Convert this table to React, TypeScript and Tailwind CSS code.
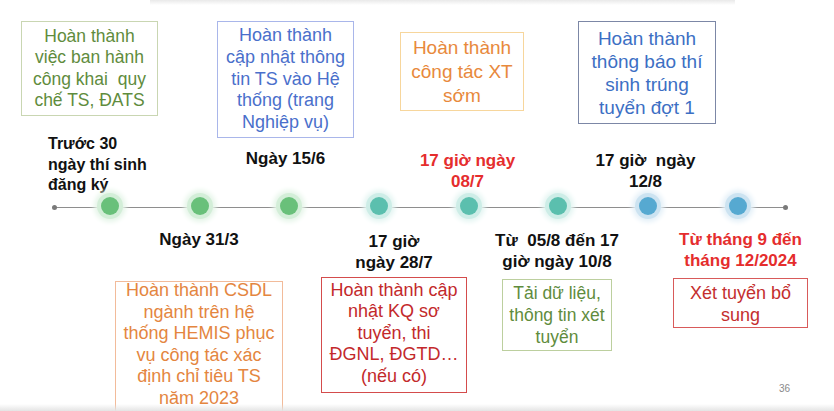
import type { ReactNode } from "react";

interface BoxProps {
  lines: string[];
  className: string;
}

// Khung văn bản có viền, mỗi dòng tách riêng để giữ đúng chỗ xuống dòng
function Box({ lines, className }: BoxProps) {
  return (
    <div className={`border text-center whitespace-pre ${className}`}>
      {lines.map((line) => (
        <div key={line}>{line}</div>
      ))}
    </div>
  );
}

function Label({ children, className = "" }: { children: ReactNode; className?: string }) {
  return (
    <div className={`font-bold text-[17px] leading-[21px] text-center whitespace-pre ${className}`}>
      {children}
    </div>
  );
}

const dots = [
  { fill: "bg-[#69c07a]", glow: "bg-[#d3eed8] shadow-[0_0_5px_3px_#e6f5e9]" },
  { fill: "bg-[#69c07a]", glow: "bg-[#d3eed8] shadow-[0_0_5px_3px_#e6f5e9]" },
  { fill: "bg-[#69c07a]", glow: "bg-[#d3eed8] shadow-[0_0_5px_3px_#e6f5e9]" },
  { fill: "bg-[#5bbfae]", glow: "bg-[#cdede7] shadow-[0_0_5px_3px_#e4f5f2]" },
  { fill: "bg-[#5bbfae]", glow: "bg-[#cdede7] shadow-[0_0_5px_3px_#e4f5f2]" },
  { fill: "bg-[#5bbfae]", glow: "bg-[#cdede7] shadow-[0_0_5px_3px_#e4f5f2]" },
  { fill: "bg-[#56a9d1]", glow: "bg-[#cce3f1] shadow-[0_0_5px_3px_#e4f0f8]" },
  { fill: "bg-[#56a9d1]", glow: "bg-[#cce3f1] shadow-[0_0_5px_3px_#e4f0f8]" },
];

export default function App() {
  return (
    <div className="relative w-[834px] h-[411px] overflow-hidden bg-white font-['Liberation_Sans','Arial',sans-serif] text-[#111]">
      <div className="ml-[150px] w-[585px] h-[5px] bg-linear-to-b from-[#e9e9e9] to-white" />

      {/* phần trên trục thời gian */}
      <div className="flex items-start h-[188px]">
        <div className="ml-[21px] w-[137px] flex flex-col">
          <Box
            lines={["Hoàn thành", "việc ban hành", "công khai  quy", "chế TS, ĐATS"]}
            className="mt-[16px] border-[#c9d6b2] text-[#5f8c3d] text-[17.5px] leading-[21.6px] pt-[3.5px] pb-[3.5px]"
          />
          <div className="mt-[18px] pl-[27px] font-bold text-[16px] leading-[20.5px] whitespace-nowrap">
            <div>Trước 30</div>
            <div>ngày thí sinh</div>
            <div>đăng ký</div>
          </div>
        </div>

        <div className="ml-[59px] w-[137px] flex flex-col">
          <Box
            lines={["Hoàn thành", "cập nhật thông", "tin TS vào Hệ", "thống (trang", "Nghiệp vụ)"]}
            className="mt-[16px] border-[#a9b6ea] text-[#4a6fcb] text-[18px] leading-[21.75px] py-[3px]"
          />
          <Label className="mt-[10.5px]">Ngày 15/6</Label>
        </div>

        <div className="ml-[46px] w-[124px] flex flex-col">
          <Box
            lines={["Hoàn thành", "công tác XT", "sớm"]}
            className="mt-[27px] border-[#f7d69c] text-[#e8893c] text-[19px] leading-[24px] pt-[3px] pb-[2px]"
          />
          <Label className="mt-[38.5px] pl-[11px] text-[#e52d2d]">
            <div>17 giờ ngày</div>
            <div>08/7</div>
          </Label>
        </div>

        <div className="ml-[54px] w-[138px] flex flex-col">
          <Box
            lines={["Hoàn thành", "thông báo thí", "sinh trúng", "tuyển đợt 1"]}
            className="mt-[16px] border-[#7c87a6] text-[#3c6fc4] text-[19px] leading-[23.3px] pt-[4.5px] pb-[3.5px]"
          />
          <Label className="mt-[25.5px] pr-[3px]">
            <div>17 giờ  ngày</div>
            <div>12/8</div>
          </Label>
        </div>
      </div>

      {/* trục thời gian */}
      <div className="relative h-[28px] flex items-center">
        <div className="absolute left-[54px] w-[731px] top-[13.5px] h-[1.5px] bg-[#8e8e8e]" />
        <div className="relative ml-[52px] w-[5px] h-[5px] rounded-full bg-[#7a7a7a]" />
        <div className="relative ml-[40px] flex items-center gap-[63.7px]">
          {dots.map((d, i) => (
            <div
              key={i}
              className={`w-[26px] h-[26px] rounded-full flex items-center justify-center -mt-[2px] ${d.glow}`}
            >
              <div className={`w-[18px] h-[18px] rounded-full ${d.fill}`} />
            </div>
          ))}
        </div>
        <div className="relative ml-[32px] w-[5px] h-[5px] rounded-full bg-[#7a7a7a]" />
      </div>

      {/* phần dưới trục thời gian */}
      <div className="flex items-start">
        <div className="ml-[115px] w-[168px] flex flex-col items-center">
          <Label className="mt-[7.5px]">Ngày 31/3</Label>
          <div className="mt-[31.5px] w-full h-[140px] border border-[#f2bb9a] text-center text-[#e4863f] text-[18px] leading-[21.6px] whitespace-pre">
            <div className="-mt-[2px]">
              <div>Hoàn thành CSDL</div>
              <div>ngành trên hệ</div>
              <div>thống HEMIS phục</div>
              <div>vụ công tác xác</div>
              <div>định chỉ tiêu TS</div>
              <div>năm 2023</div>
            </div>
          </div>
        </div>

        <div className="ml-[38px] w-[146px] flex flex-col items-center">
          <Label className="mt-[9.5px]">
            <div>17 giờ</div>
            <div>ngày 28/7</div>
          </Label>
          <Box
            lines={["Hoàn thành cập", "nhật KQ sơ", "tuyển, thi", "ĐGNL, ĐGTD…", "(nếu có)"]}
            className="mt-[4.5px] w-full border-[#d44c4c] text-[#c3292b] text-[18px] leading-[21.4px] pt-[2px] pb-[5px]"
          />
        </div>

        <div className="ml-[35px] w-[110px] flex flex-col items-center">
          <Label className="mt-[8.5px]">
            <div>Từ  05/8 đến 17</div>
            <div>giờ ngày 10/8</div>
          </Label>
          <Box
            lines={["Tải dữ liệu,", "thông tin xét", "tuyển"]}
            className="mt-[7.5px] w-full border-[#bccf9e] text-[#5f8c3d] text-[17.5px] leading-[22px] py-[2px]"
          />
        </div>

        <div className="ml-[61px] w-[135px] flex flex-col items-center">
          <Label className="mt-[7.5px] text-[#e52d2d]">
            <div>Từ tháng 9 đến</div>
            <div>tháng 12/2024</div>
          </Label>
          <Box
            lines={["Xét tuyển bổ", "sung"]}
            className="mt-[7.5px] w-full border-[#d85a5a] text-[#c42e2e] text-[18px] leading-[22px] pt-[3px] pb-[1px]"
          />
          <div className="self-end mr-[18px] mt-[55px] text-[10px] leading-[12px] text-[#8a8a8a]">36</div>
        </div>
      </div>

      <div className="absolute inset-x-0 bottom-0 h-[7px] bg-linear-to-b from-transparent to-[#e4e4e4]" />
    </div>
  );
}
